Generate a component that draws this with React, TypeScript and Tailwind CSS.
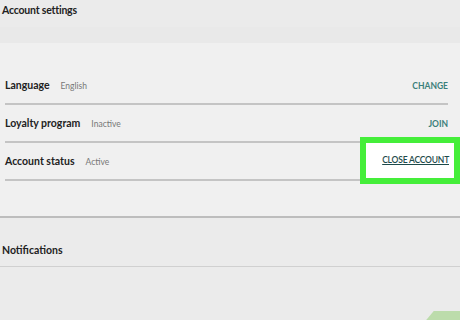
import React from "react";

type Row = { label: string; value: string; action: string; highlight?: boolean };

const rows: Row[] = [
  { label: "Language", value: "English", action: "CHANGE" },
  { label: "Loyalty program", value: "Inactive", action: "JOIN" },
  { label: "Account status", value: "Active", action: "CLOSE ACCOUNT", highlight: true },
];

export default function App() {
  return (
    <div
      className="relative w-[460px] h-[320px] overflow-hidden bg-[#ebebeb] text-[#222]"
      style={{ fontFamily: 'Lato, "Open Sans", sans-serif' }}
    >
      {/* header */}
      <div className="h-[27px] pl-[2px] bg-[#ebebeb] text-[10.5px] font-bold leading-[20px] tracking-[-0.2px]">Account settings</div>
      <div className="h-[16px] bg-[#e9e9e9]" />

      {/* settings panel */}
      <div className="h-[175px] bg-[#f0f0f0] border-b-2 border-[#bdbdbd] pt-[24px] pl-[5px] pr-[12px]">
        {rows.map((r) => (
          <div key={r.label} className="relative h-[38px] flex items-center justify-between border-b-2 border-[#c4c4c4]">
            <div className="flex items-center gap-[11px] pt-[2px]">
              <span className="text-[10.5px] font-bold">{r.label}</span>
              <span className="text-[8.5px] text-[#777]">{r.value}</span>
            </div>
            {r.highlight ? (
              <div className="absolute right-[-12px] top-[-6px] w-[100px] h-[47px] border-[6px] border-[#45ee3a] bg-white flex items-center justify-end pr-[5px]">
                <span className="text-[8.5px] font-semibold text-[#1d4a4a] underline tracking-[-0.2px]">{r.action}</span>
              </div>
            ) : (
              <span className="text-[8.5px] font-bold text-[#3b7f7a] pt-[2px]">{r.action}</span>
            )}
          </div>
        ))}
      </div>

      {/* notifications */}
      <div className="h-[49px] border-b border-[#d0d0d0] flex items-end pb-[7px] pl-[2px]">
        <span className="text-[10.5px] font-bold">Notifications</span>
      </div>

      <div className="absolute right-[-10px] bottom-0 w-[40px] h-[9px] bg-[#bcdcab] -skew-x-[40deg]" />
    </div>
  );
}
